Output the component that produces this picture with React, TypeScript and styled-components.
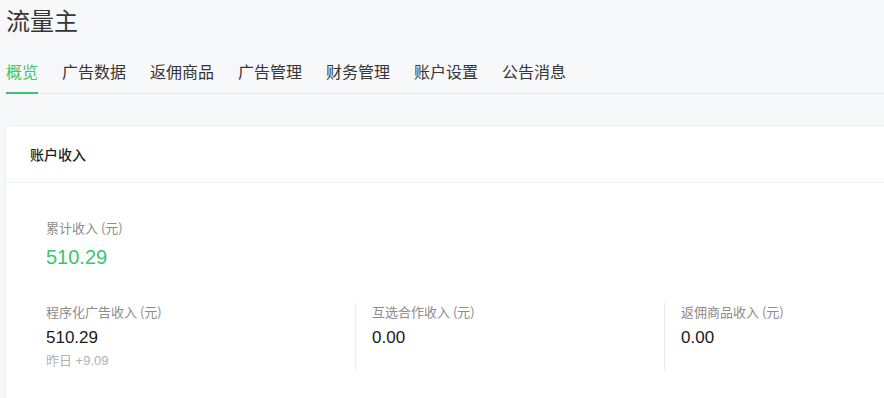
import React from 'react';
import styled, { createGlobalStyle } from 'styled-components';

const Global = createGlobalStyle`
  html, body {
    margin: 0;
    padding: 0;
    background: #f7f8fa;
    overflow: hidden;
    font-family: 'Noto Sans CJK SC', 'Liberation Sans', sans-serif;
  }
`;

const tabs = ['概览', '广告数据', '返佣商品', '广告管理', '财务管理', '账户设置', '公告消息'];

const stats = [
  { label: '程序化广告收入 (元)', value: '510.29', extra: '昨日 +9.09' },
  { label: '互选合作收入 (元)', value: '0.00' },
  { label: '返佣商品收入 (元)', value: '0.00' },
];

export default function App() {
  return (
    <Page>
      <Global />
      <Title>流量主</Title>
      <TabBar>
        {tabs.map((t, i) => (
          <Tab key={t} active={i === 0}>{t}</Tab>
        ))}
      </TabBar>
      <Card>
        <CardHead>账户收入</CardHead>
        <CardBody>
          <Label>累计收入 (元)</Label>
          <Total>510.29</Total>
          <StatRow>
            {stats.map((s, i) => (
              <Stat key={s.label} first={i === 0}>
                <Label>{s.label}</Label>
                <Value>{s.value}</Value>
                {s.extra && <Extra>{s.extra}</Extra>}
              </Stat>
            ))}
          </StatRow>
        </CardBody>
      </Card>
    </Page>
  );
}

const Page = styled.div`
  width: 100%;
  overflow: hidden;
  padding-left: 5px;
  box-sizing: border-box;
`;

const Title = styled.h1`
  margin: 0;
  padding: 3px 0 0 1px;
  font-size: 24px;
  line-height: 34px;
  font-weight: 400;
  color: #353535;
`;

const TabBar = styled.div`
  display: flex;
  gap: 24px;
  margin-top: 22px;
  border-bottom: 1px solid #e4e6ea;
  padding-left: 1px;
`;

const Tab = styled.div<{ active?: boolean }>`
  font-size: 16px;
  line-height: 24px;
  padding-bottom: 9px;
  margin-bottom: -1px;
  color: ${p => (p.active ? '#3ec46b' : '#353535')};
  border-bottom: 2px solid ${p => (p.active ? '#3ec46b' : 'transparent')};
`;

const Card = styled.div`
  width: 1010px;
  margin-top: 31px;
  background: #fff;
  border: 1px solid #ebedf0;
  border-radius: 6px;
`;

const CardHead = styled.div`
  height: 56px;
  line-height: 56px;
  padding-left: 24px;
  font-size: 14px;
  font-weight: 500;
  color: #1f1f1f;
  border-bottom: 1px solid #eeeff2;
`;

const CardBody = styled.div`
  padding: 36px 40px 30px;
`;

const Label = styled.div`
  font-size: 13px;
  line-height: 18px;
  color: #8c8c8c;
`;

const Total = styled.div`
  margin-top: 8px;
  font-family: 'Liberation Sans', sans-serif;
  font-size: 20px;
  line-height: 24px;
  color: #3ec46b;
`;

const StatRow = styled.div`
  display: grid;
  grid-template-columns: repeat(3, 309px);
  margin-top: 34px;
`;

const Stat = styled.div<{ first?: boolean }>`
  height: 68px;
  padding-left: ${p => (p.first ? '0' : '16px')};
  border-left: ${p => (p.first ? 'none' : '1px solid #ebebeb')};
`;

const Value = styled.div`
  margin-top: 6px;
  font-family: 'Liberation Sans', sans-serif;
  font-size: 17px;
  line-height: 22px;
  color: #1a1a1a;
`;

const Extra = styled.div`
  margin-top: 3px;
  font-family: 'Liberation Sans', 'Noto Sans CJK SC', sans-serif;
  font-size: 13px;
  line-height: 18px;
  color: #b2b2b2;
`;
